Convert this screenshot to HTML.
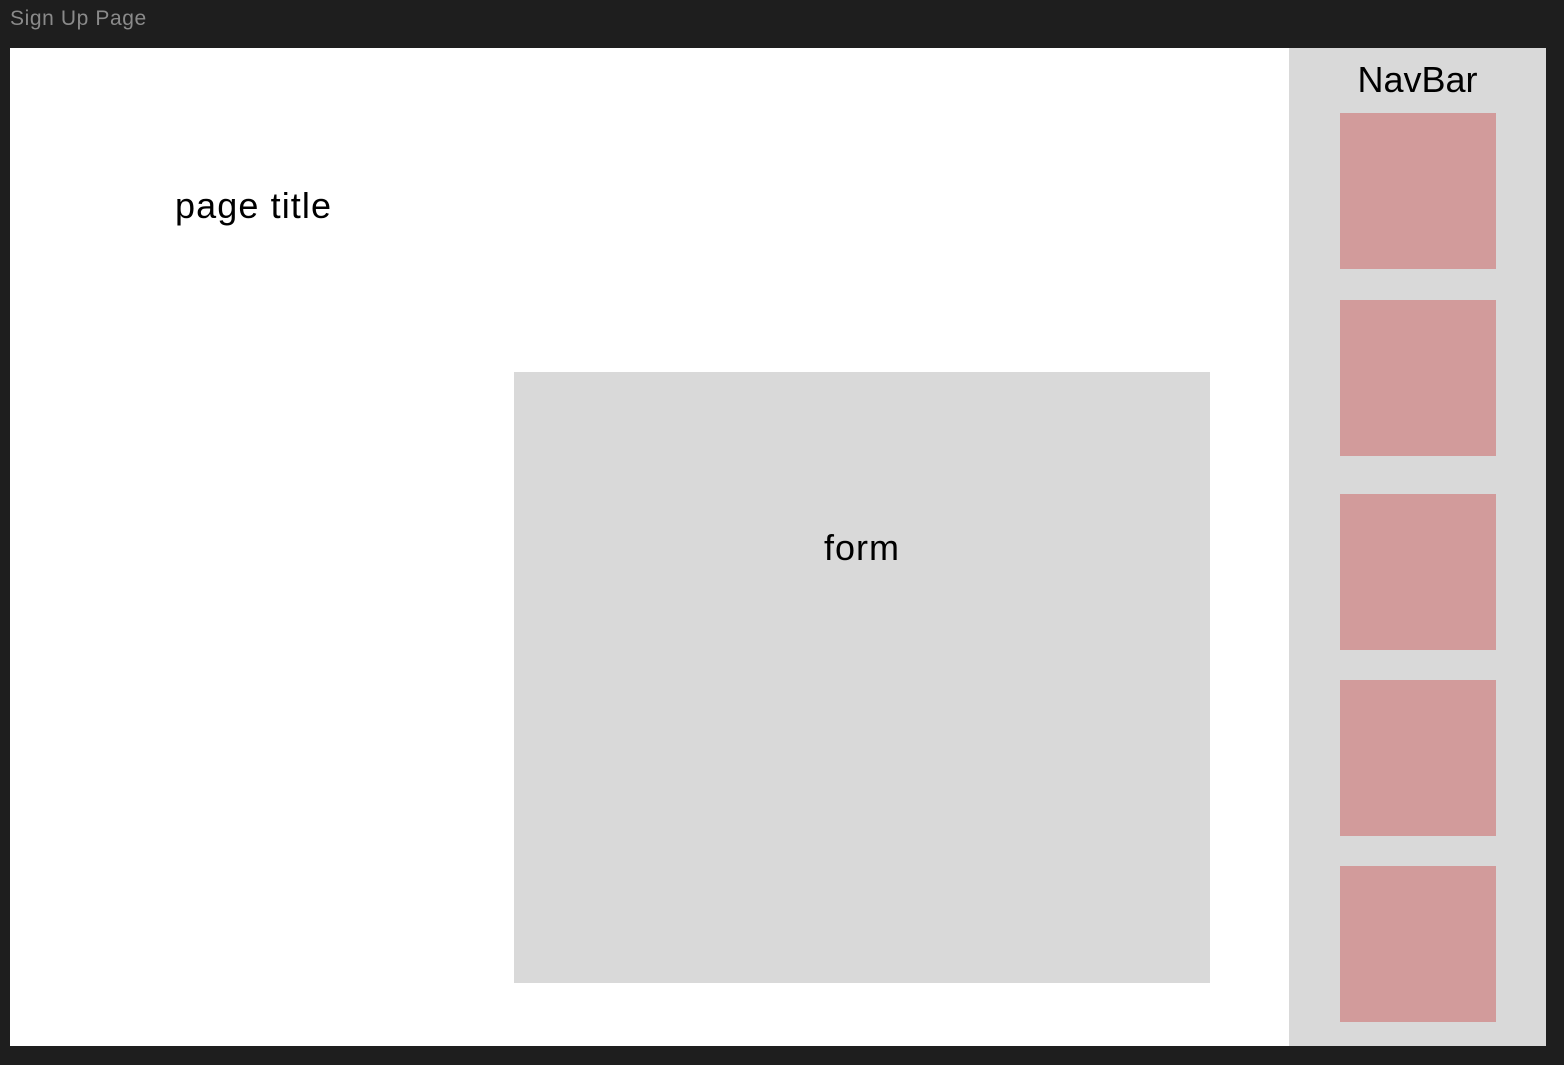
<!DOCTYPE html>
<html><head><meta charset="utf-8"><style>
html,body{margin:0;padding:0;width:1564px;height:1065px;background:#1e1e1e;overflow:hidden;font-family:"Liberation Sans",sans-serif;}
.lbl{position:absolute;left:10px;top:7px;color:#8a8a8a;font-size:21px;letter-spacing:0.6px;}
.frame{position:absolute;left:10px;top:48px;width:1536px;height:998px;background:#fff;}
.title{position:absolute;left:165px;top:137px;font-size:36px;color:#000;letter-spacing:1.1px;}
.form{position:absolute;left:504px;top:324px;width:696px;height:611px;background:#d9d9d9;}
.form span{position:absolute;left:0;right:0;top:155px;text-align:center;font-size:36px;letter-spacing:1px;}
.nav{position:absolute;left:1279px;top:0;width:257px;height:998px;background:#d9d9d9;}
.nav .h{position:absolute;left:0;right:0;top:11px;text-align:center;font-size:36px;}
.b{position:absolute;left:51px;width:156px;height:156px;background:#d29b9b;}
</style></head><body>
<div class="lbl">Sign Up Page</div>
<div class="frame">
<div class="title">page title</div>
<div class="form"><span>form</span></div>
<div class="nav"><div class="h">NavBar</div>
<div class="b" style="top:65px"></div>
<div class="b" style="top:252px"></div>
<div class="b" style="top:446px"></div>
<div class="b" style="top:632px"></div>
<div class="b" style="top:818px"></div>
</div>
</div>
</body></html>
